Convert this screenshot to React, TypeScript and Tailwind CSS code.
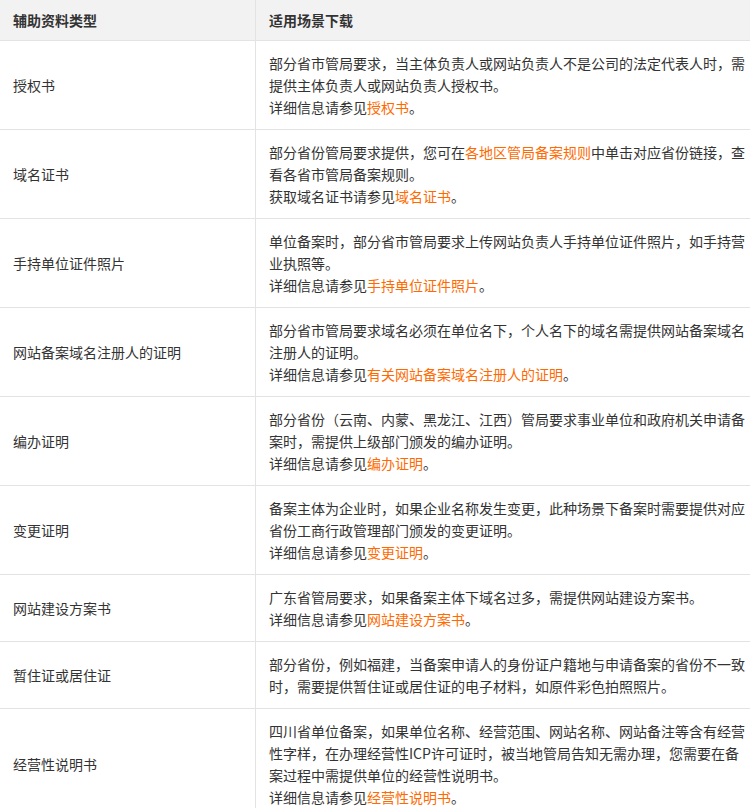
import React from 'react';

const O = ({ children }: { children: React.ReactNode }) => <span className="text-[#ff6a00]">{children}</span>;

const rows: { name: string; body: React.ReactNode }[] = [
  { name: '授权书', body: <>部分省市管局要求，当主体负责人或网站负责人不是公司的法定代表人时，需提供主体负责人或网站负责人授权书。<br />详细信息请参见<O>授权书</O>。</> },
  { name: '域名证书', body: <>部分省份管局要求提供，您可在<O>各地区管局备案规则</O>中单击对应省份链接，查看各省市管局备案规则。<br />获取域名证书请参见<O>域名证书</O>。</> },
  { name: '手持单位证件照片', body: <>单位备案时，部分省市管局要求上传网站负责人手持单位证件照片，如手持营业执照等。<br />详细信息请参见<O>手持单位证件照片</O>。</> },
  { name: '网站备案域名注册人的证明', body: <>部分省市管局要求域名必须在单位名下，个人名下的域名需提供网站备案域名注册人的证明。<br />详细信息请参见<O>有关网站备案域名注册人的证明</O>。</> },
  { name: '编办证明', body: <>部分省份（云南、内蒙、黑龙江、江西）管局要求事业单位和政府机关申请备案时，需提供上级部门颁发的编办证明。<br />详细信息请参见<O>编办证明</O>。</> },
  { name: '变更证明', body: <>备案主体为企业时，如果企业名称发生变更，此种场景下备案时需要提供对应省份工商行政管理部门颁发的变更证明。<br />详细信息请参见<O>变更证明</O>。</> },
  { name: '网站建设方案书', body: <>广东省管局要求，如果备案主体下域名过多，需提供网站建设方案书。<br />详细信息请参见<O>网站建设方案书</O>。</> },
  { name: '暂住证或居住证', body: <>部分省份，例如福建，当备案申请人的身份证户籍地与申请备案的省份不一致时，需要提供暂住证或居住证的电子材料，如原件彩色拍照照片。</> },
  { name: '经营性说明书', body: <>四川省单位备案，如果单位名称、经营范围、网站名称、网站备注等含有经营性字样，在办理经营性ICP许可证时，被当地管局告知无需办理，您需要在备案过程中需提供单位的经营性说明书。<br />详细信息请参见<O>经营性说明书</O>。</> },
];

export default function App() {
  return (
    <div className="w-[750px] h-[808px] overflow-hidden bg-white" style={{ fontFamily: '"Noto Sans CJK SC", "Liberation Sans", sans-serif' }}>
      <div className="w-[764px] text-[14px] leading-[22px] text-[#333]">
        <div className="flex bg-[#f2f2f2] border-b border-[#e3e3e3] font-bold h-[41px] items-center">
          <div className="w-[256px] px-[13px] border-r border-[#e3e3e3] h-full flex items-center">辅助资料类型</div>
          <div className="flex-1 px-[13px]">适用场景下载</div>
        </div>
        {rows.map((r) => (
          <div key={r.name} className="flex border-b border-[#e3e3e3]">
            <div className="w-[256px] shrink-0 px-[13px] border-r border-[#e3e3e3] flex items-center">{r.name}</div>
            <div className="flex-1 px-[13px] py-[11px]">{r.body}</div>
          </div>
        ))}
      </div>
    </div>
  );
}
